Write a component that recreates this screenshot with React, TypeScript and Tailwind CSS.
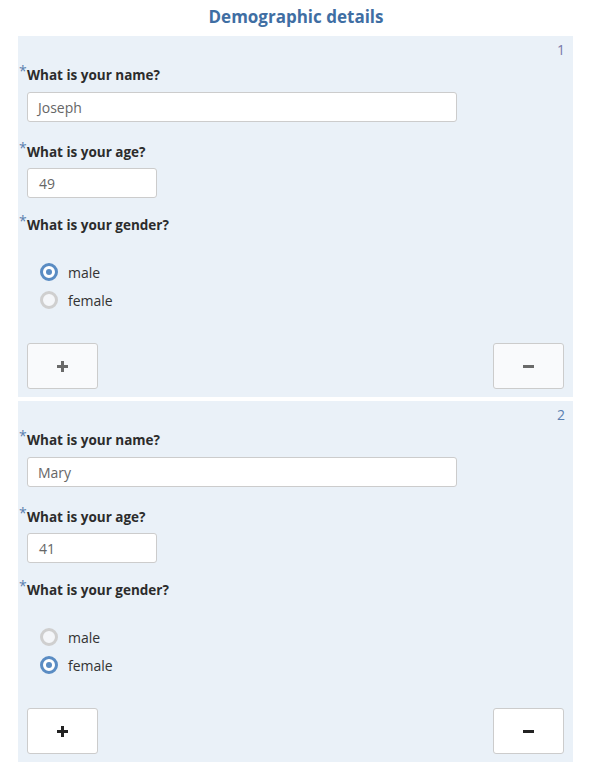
import React from "react";

const font = { fontFamily: '"Open Sans", "Noto Sans", sans-serif' };

function Label({ text, mt }: { text: string; mt: string }) {
  return (
    <div className={`${mt} -ml-[9px] h-[20px] leading-[20px] text-[13.5px] flex items-start`}>
      <span className="w-[9px] text-[14px] leading-[14px] text-[#5b7fae] -mt-[1px] pl-[1px]">*</span>
      <span className="font-bold text-[#2c2c2c]">{text}</span>
    </div>
  );
}

function Radio({ label, checked }: { label: string; checked: boolean }) {
  return (
    <div className="h-[28px] flex items-center pl-[13px]">
      {checked ? (
        <div className="w-[18px] h-[18px] rounded-full border-[3px] border-[#5a8cc3] bg-white flex items-center justify-center">
          <div className="w-[6px] h-[6px] rounded-full bg-[#5a8cc3]" />
        </div>
      ) : (
        <div className="w-[18px] h-[18px] rounded-full border-[3px] border-[#cfcfcf] bg-[#f4f6f9]" />
      )}
      <span className="ml-[10px] text-[14px] text-[#333]">{label}</span>
    </div>
  );
}

function Panel({
  n,
  name,
  age,
  gender,
  muted,
  mt,
}: {
  n: number;
  name: string;
  age: string;
  gender: "male" | "female";
  muted: boolean;
  mt: string;
}) {
  const glyph = muted ? "#6a6a6a" : "#222";
  const btn = muted ? "bg-[#f9fafc]" : "bg-white";
  return (
    <div className={`${mt} mx-[18px] w-[555px] bg-[#eaf1f8] px-[9px] pb-[8px]`}>
      <div className={`pt-[4px] h-[24px] leading-[20px] text-[14px] text-right -mr-[1px] ${muted ? "text-[#7a78a8]" : "text-[#5a7fb0]"}`}>
        {n}
      </div>
      <Label text="What is your name?" mt="mt-[5px]" />
      <div className="mt-[7px] w-[430px] h-[30px] bg-white border border-[#cccccc] rounded-[3px] flex items-center px-[10px] text-[14px] text-[#666]">
        {name}
      </div>
      <Label text="What is your age?" mt="mt-[20px]" />
      <div className="mt-[6px] w-[130px] h-[30px] bg-white border border-[#cccccc] rounded-[3px] flex items-center px-[11px] text-[14px] text-[#666]">
        {age}
      </div>
      <Label text="What is your gender?" mt="mt-[17px]" />
      <div className="mt-[23px]">
        <Radio label="male" checked={gender === "male"} />
        <Radio label="female" checked={gender === "female"} />
      </div>
      <div className="mt-[29px] flex justify-between">
        <div className={`w-[71px] h-[46px] ${btn} border border-[#cccccc] rounded-[3px] flex items-center justify-center`}>
          <svg width="11" height="11" viewBox="0 0 11 11">
            <rect x="4" y="0" width="3" height="11" fill={glyph} />
            <rect x="0" y="4" width="11" height="3" fill={glyph} />
          </svg>
        </div>
        <div className={`w-[71px] h-[46px] ${btn} border border-[#cccccc] rounded-[3px] flex items-center justify-center`}>
          <svg width="11" height="3" viewBox="0 0 11 3">
            <rect x="0" y="0" width="11" height="3" fill={glyph} />
          </svg>
        </div>
      </div>
    </div>
  );
}

export default function App() {
  return (
    <div className="w-[598px] h-[772px] bg-white" style={font}>
      <div className="h-[36px] pt-[5px] pr-[6px] text-center text-[17px] leading-[24px] font-bold text-[#3f6ea3]">
        Demographic details
      </div>
      <Panel n={1} name="Joseph" age="49" gender="male" muted mt="mt-0" />
      <Panel n={2} name="Mary" age="41" gender="female" muted={false} mt="mt-[4px]" />
    </div>
  );
}
